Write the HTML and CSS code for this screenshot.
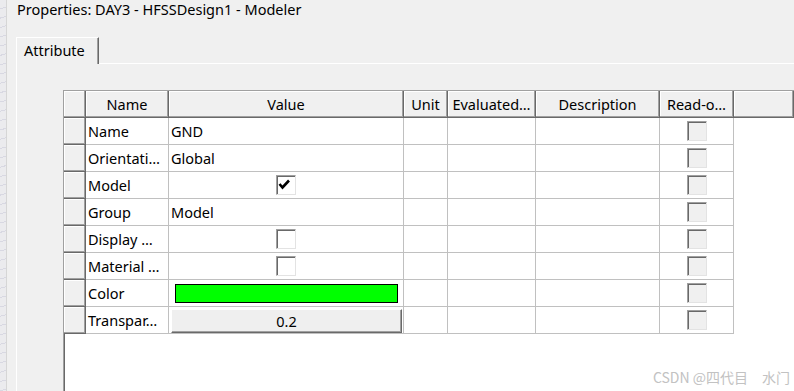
FILE: index.html
```html
<!DOCTYPE html>
<html lang="en">
<head>
  <meta charset="UTF-8">
  <title>Properties: DAY3 - HFSSDesign1 - Modeler</title>
  <link rel="stylesheet" href="styles.css">
</head>
<body>
  <div class="window">
    <div class="side-strip"></div>

    <div class="main">
      <div class="title">Properties: DAY3 - HFSSDesign1 - Modeler</div>

      <div class="tabs">
        <div class="tab">Attribute</div>
      </div>

      <div class="panel">
        <div class="grid">
          <!-- column headers -->
          <div class="grid-row head-row">
            <div class="hcell"></div>
            <div class="hcell">Name</div>
            <div class="hcell">Value</div>
            <div class="hcell">Unit</div>
            <div class="hcell">Evaluated…</div>
            <div class="hcell">Description</div>
            <div class="hcell">Read-o…</div>
            <div class="hcell"></div>
          </div>

          <div class="grid-row">
            <div class="hcell"></div>
            <div class="cell">Name</div>
            <div class="cell">GND</div>
            <div class="cell"></div><div class="cell"></div><div class="cell"></div>
            <div class="cell center"><span class="check ro"></span></div>
          </div>

          <div class="grid-row">
            <div class="hcell"></div>
            <div class="cell">Orientati…</div>
            <div class="cell">Global</div>
            <div class="cell"></div><div class="cell"></div><div class="cell"></div>
            <div class="cell center"><span class="check ro"></span></div>
          </div>

          <div class="grid-row">
            <div class="hcell"></div>
            <div class="cell">Model</div>
            <div class="cell center">
              <span class="check">
                <svg width="18" height="18" viewBox="0 0 18 18"><polyline points="2.5,8 5.5,11.5 12,4.5" fill="none" stroke="#000" stroke-width="2.6"/></svg>
              </span>
            </div>
            <div class="cell"></div><div class="cell"></div><div class="cell"></div>
            <div class="cell center"><span class="check ro"></span></div>
          </div>

          <div class="grid-row">
            <div class="hcell"></div>
            <div class="cell">Group</div>
            <div class="cell">Model</div>
            <div class="cell"></div><div class="cell"></div><div class="cell"></div>
            <div class="cell center"><span class="check ro"></span></div>
          </div>

          <div class="grid-row">
            <div class="hcell"></div>
            <div class="cell">Display …</div>
            <div class="cell center"><span class="check"></span></div>
            <div class="cell"></div><div class="cell"></div><div class="cell"></div>
            <div class="cell center"><span class="check ro"></span></div>
          </div>

          <div class="grid-row">
            <div class="hcell"></div>
            <div class="cell">Material …</div>
            <div class="cell center"><span class="check"></span></div>
            <div class="cell"></div><div class="cell"></div><div class="cell"></div>
            <div class="cell center"><span class="check ro"></span></div>
          </div>

          <div class="grid-row">
            <div class="hcell"></div>
            <div class="cell">Color</div>
            <div class="cell"><span class="swatch"></span></div>
            <div class="cell"></div><div class="cell"></div><div class="cell"></div>
            <div class="cell center"><span class="check ro"></span></div>
          </div>

          <div class="grid-row">
            <div class="hcell"></div>
            <div class="cell">Transpar…</div>
            <div class="cell btn-cell"><button class="value-btn">0.2</button></div>
            <div class="cell"></div><div class="cell"></div><div class="cell"></div>
            <div class="cell center"><span class="check ro"></span></div>
          </div>
        </div>
      </div>
    </div>

    <div class="watermark">CSDN @四代目　水门</div>
  </div>
</body>
</html>
```

FILE: styles.css
```css
body {
  margin: 0;
  padding: 0;
  background-color: #f0f0f0;
  font-family: "Noto Sans", "Liberation Sans", sans-serif;
  font-size: 14.5px;
  color: #000;
  overflow: hidden;
}
.window {
  display: flex;
  height: 391px;
  position: relative;
}
.side-strip {
  width: 6px;
  border-right: 1px solid #d6d6d6;
  background-color: #ebebee;
  background-image: repeating-linear-gradient(165deg, transparent 0 8px, #d8d8e2 8px 9px);
}
.main {
  flex: 1;
  display: flex;
  flex-direction: column;
  padding-left: 9px;
  min-width: 0;
}
.title {
  height: 37px;
  line-height: 18px;
  padding-left: 1px;
  white-space: nowrap;
}
.tabs {
  display: flex;
  height: 26px;
}
.tab {
  position: relative;
  z-index: 1;
  box-sizing: border-box;
  width: 83px;
  height: 27px;
  padding: 2px 0 0 7px;
  background-color: #f0f0f0;
  border-top: 1px solid #fff;
  border-left: 1px solid #fff;
  border-right: 1px solid #696969;
  box-shadow: inset -1px 0 #a0a0a0;
  line-height: 20px;
}
.panel {
  flex: 1;
  border-top: 1px solid #fff;
  border-left: 1px solid #fff;
  padding: 26px 0 0 46px;
  overflow: hidden;
}
.grid {
  --cols: 22px 83px 235px 44px 88px 124px 74px;
  height: 100%;
  background-color: #fff;
  border-left: 1px solid #a0a0a0;
  border-top: 1px solid #a0a0a0;
  box-shadow: inset 1px 0 #696969;
}
.grid-row {
  display: grid;
  grid-template-columns: var(--cols);
  height: 27px;
}
.head-row {
  grid-template-columns: var(--cols) 1fr;
}
.hcell,
.cell {
  box-sizing: border-box;
  display: flex;
  align-items: center;
  overflow: hidden;
  white-space: nowrap;
}
.hcell {
  justify-content: center;
  background-color: #f0f0f0;
  border-right: 1px solid #696969;
  border-bottom: 1px solid #696969;
  box-shadow: inset -1px -1px #a0a0a0, inset 1px 1px #fff;
}
.cell {
  padding: 0 2px;
  border-right: 1px solid #c0c0c0;
  border-bottom: 1px solid #c0c0c0;
}
.center {
  justify-content: center;
}
.check {
  box-sizing: border-box;
  width: 20px;
  height: 20px;
  display: flex;
  align-items: center;
  justify-content: center;
  background-color: #fff;
  border: 1px solid;
  border-color: #a0a0a0 #e3e3e3 #e3e3e3 #a0a0a0;
  box-shadow: inset 1px 1px #696969;
}
.check.ro {
  background-color: #f0f0f0;
}
.swatch {
  flex: 1;
  height: 19px;
  margin: 0 3px 0 4px;
  box-sizing: border-box;
  border: 1px solid #000;
  background-color: #00ff00;
}
.btn-cell {
  align-items: stretch;
  padding: 2px 1px 0 2px;
}
.value-btn {
  flex: 1;
  margin: 0;
  padding: 0;
  font: inherit;
  color: #000;
  background-color: #efefef;
  border: 1px solid;
  border-color: #fff #696969 #696969 #fff;
  box-shadow: inset -1px -1px #a0a0a0;
}
.watermark {
  position: absolute;
  right: 4px;
  bottom: 4px;
  font-family: "Noto Sans CJK SC", sans-serif;
  font-size: 14px;
  color: #c2c2c2;
}
```
